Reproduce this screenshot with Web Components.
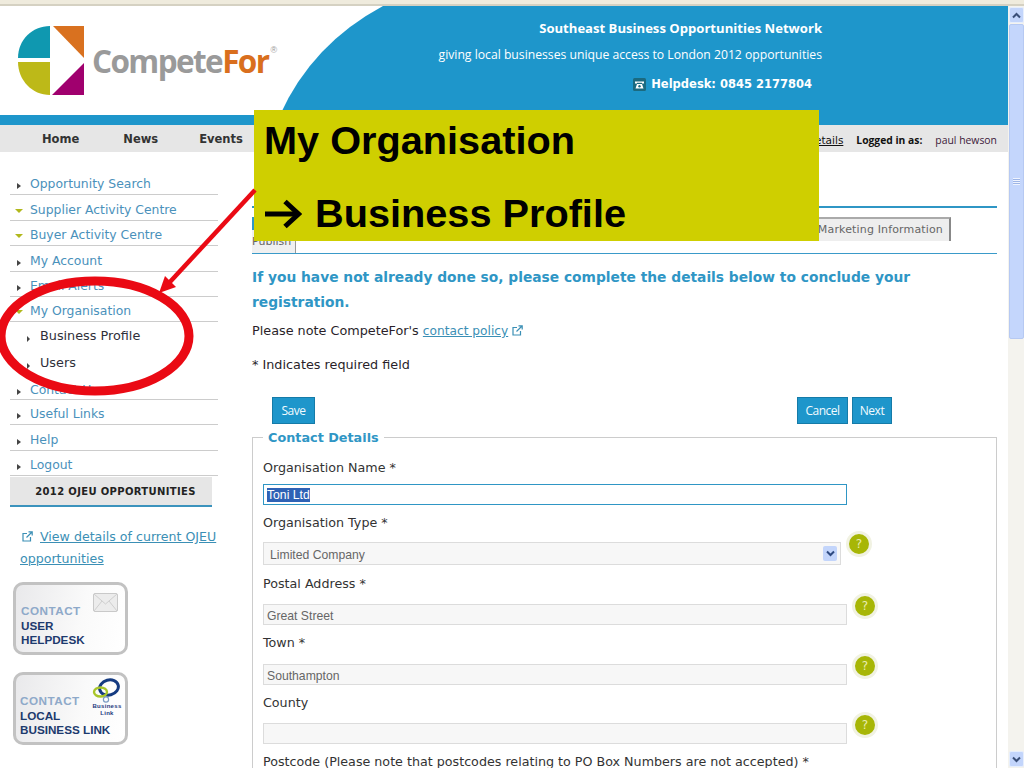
<!DOCTYPE html>
<html lang="en">
<head>
<meta charset="utf-8">
<title>CompeteFor - Business Profile</title>
<style>
  html, body { margin: 0; padding: 0; background: #fff; }
  body { font: 13px "DejaVu Sans", sans-serif; color: #222; }
</style>
</head>
<body>
<browser-frame>
  <site-header></site-header>
  <site-nav></site-nav>
  <page-body>
    <side-menu slot="side"></side-menu>
    <profile-form></profile-form>
  </page-body>
  <callout-overlay slot="overlay"></callout-overlay>
</browser-frame>

<script>
const extIcon = `<svg width="11" height="11" viewBox="0 0 11 11" fill="none" stroke="#3b8fb5" stroke-width="1.2"><path d="M5 2.5H1v7.5h7.5V6"/><path d="M4.5 6.5L10 1M6.5 .8H10.2V4.5"/></svg>`;

class BrowserFrame extends HTMLElement {
  constructor() {
    super();
    this.attachShadow({ mode: 'open' }).innerHTML = `
      <style>
        :host { display: block; position: relative; width: 1024px; height: 768px; overflow: hidden; }
        .chrome { height: 6px; box-sizing: border-box; background: #efebdd; border-bottom: 2px solid #d5d1c2; }
        .row { display: flex; height: 762px; }
        .page { width: 1008px; overflow: hidden; }
        .bar { width: 16px; display: flex; flex-direction: column; background: #f4f3ee; }
        .btn { height: 16px; margin: 1px; width: 15px; box-sizing: border-box; border-radius: 2px; background: #c3d5fb; border: 1px solid #e6eefc; display: flex; align-items: center; justify-content: center; }
        .thumb { height: 315px; margin-left: 1px; width: 15px; box-sizing: border-box; background: #c4d6fc; border: 1px solid #b6c9f2; border-radius: 2px; display: flex; align-items: center; justify-content: center; }
        .grip { width: 7px; height: 7px; background: repeating-linear-gradient(#eef3fe 0 1px, #9db5e6 1px 2px); }
        .track { flex: 1; }
      </style>
      <div class="chrome"></div>
      <div class="row">
        <div class="page"><slot></slot></div>
        <div class="bar">
          <div class="btn"><svg width="9" height="7" viewBox="0 0 9 7" fill="none" stroke="#3a4f78" stroke-width="2"><path d="M1 5.5L4.5 2L8 5.5"/></svg></div>
          <div class="thumb"><div class="grip"></div></div>
          <div class="track"></div>
          <div class="btn"><svg width="9" height="7" viewBox="0 0 9 7" fill="none" stroke="#3a4f78" stroke-width="2"><path d="M1 1.5L4.5 5L8 1.5"/></svg></div>
        </div>
      </div>
      <slot name="overlay"></slot>`;
  }
}
customElements.define('browser-frame', BrowserFrame);

class SiteHeader extends HTMLElement {
  constructor() {
    super();
    this.attachShadow({ mode: 'open' }).innerHTML = `
      <style>
        :host { display: block; }
        .top { display: flex; height: 109px; background: #fff; }
        .logo { width: 270px; flex: none; display: flex; align-items: flex-start; padding: 20px 0 0 18px; box-sizing: border-box; }
        .logo svg { flex: none; }
        .word { font: 700 31.5px/1 "Open Sans", sans-serif; letter-spacing: -1.6px; color: #9a9a9a; margin: 19px 0 0 6px; white-space: nowrap; }
        .word b { color: #d96f1e; font-weight: 700; }
        .word sup { font: 9px "Liberation Sans", sans-serif; letter-spacing: 0; color: #9a9a9a; vertical-align: top; margin-left: 2px; }
        .blue { flex: 1; background: #1e96cb; color: #fff; clip-path: path('M 10 109 Q 42 38 113 0 L 738 0 L 738 109 Z'); padding: 13px 186px 0 0; box-sizing: border-box; text-align: right; }
        .t1 { font: 700 13.1px/18px "Open Sans", sans-serif; }
        .t2 { font: 12.2px/18px "Open Sans", sans-serif; margin-top: 9px; }
        .t3 { font: 700 11.5px/18px "DejaVu Sans", sans-serif; margin: 11px 10px 0 0; display: flex; justify-content: flex-end; align-items: center; gap: 5px; }
        .bar { height: 10px; background: #1e96cb; }
      </style>
      <div class="top">
        <div class="logo">
          <svg width="68" height="69" viewBox="0 0 68 69">
            <path d="M32 0V32H0C0 14 14 0 32 0Z" fill="#0f98b0"/>
            <path d="M32 36V69C14 69 0 54 0 36Z" fill="#bdb918"/>
            <path d="M35 0H66V32Z" fill="#d9711f"/>
            <path d="M66 37V69H34Z" fill="#a0006e"/>
          </svg>
          <div class="word">Compete<b>For</b><sup>®</sup></div>
        </div>
        <div class="blue">
          <div class="t1">Southeast Business Opportunities Network</div>
          <div class="t2">giving local businesses unique access to London 2012 opportunities</div>
          <div class="t3">
            <svg width="13" height="13" viewBox="0 0 13 13"><rect width="13" height="13" rx="1.5" fill="#1b6a80"/><path d="M2 5.5V3.5H11V5.5H9V4.7H4V5.5ZM4 6H9L10.5 10.5H2.5Z" fill="#fff"/><circle cx="6.5" cy="8.2" r="1.2" fill="#1b6a80"/></svg>
            <span>Helpdesk: 0845 2177804</span>
          </div>
        </div>
      </div>
      <div class="bar"></div>`;
  }
}
customElements.define('site-header', SiteHeader);

class SiteNav extends HTMLElement {
  constructor() {
    super();
    this.attachShadow({ mode: 'open' }).innerHTML = `
      <style>
        :host { display: flex; align-items: center; height: 27px; background: #e6e6e6; font: 700 11.5px "DejaVu Sans", sans-serif; color: #333; }
        .home { margin-left: 42px; }
        .news { margin-left: 44px; }
        .events { margin-left: 41px; }
        .right { margin-left: auto; display: flex; gap: 13px; padding: 3px 11px 0 0; color: #111; align-items: center; }
        .right u { font: 10.5px "DejaVu Sans", sans-serif; }
        .right b { font: 700 10.3px "Open Sans", sans-serif; }
        .right span { font: 10.4px "Open Sans", sans-serif; color: #40203a; }
      </style>
      <div class="home">Home</div>
      <div class="news">News</div>
      <div class="events">Events</div>
      <div class="right"><u>Details</u><b>Logged in as:</b><span>paul hewson</span></div>`;
  }
}
customElements.define('site-nav', SiteNav);

class PageBody extends HTMLElement {
  constructor() {
    super();
    this.attachShadow({ mode: 'open' }).innerHTML = `
      <style>
        :host { display: flex; align-items: flex-start; }
        .side { width: 208px; margin-left: 10px; flex: none; }
        .main { width: 745px; margin-left: 34px; flex: none; }
      </style>
      <div class="side"><slot name="side"></slot></div>
      <div class="main"><slot></slot></div>`;
  }
}
customElements.define('page-body', PageBody);

class MenuItem extends HTMLElement {
  constructor() {
    super();
    const kind = this.getAttribute('kind') || 'closed';
    this.attachShadow({ mode: 'open' }).innerHTML = `
      <style>
        :host { display: flex; align-items: center; box-sizing: border-box; height: var(--h, 25px); border-bottom: 1px solid #ccc; color: #4a91bb; font-size: 12.4px; padding: 3px 0 0 20px; position: relative; white-space: nowrap; }
        :host([kind="sub"]) { border-bottom: none; color: #2f2f3a; font-size: 12.8px; padding-left: 30px; padding-top: 0; }
        .m { position: absolute; width: 0; height: 0; top: 50%; }
        .closed { left: 7px; margin-top: 1px; border-left: 4px solid #444; border-top: 3px solid transparent; border-bottom: 3px solid transparent; }
        .open { left: 5px; margin-top: 1px; border-top: 4px solid #b1b81c; border-left: 4.5px solid transparent; border-right: 4.5px solid transparent; }
        .sub { left: 17px; margin-top: 0; border-left: 3px solid #444; border-top: 3px solid transparent; border-bottom: 3px solid transparent; }
      </style>
      <i class="m ${kind}"></i><slot></slot>`;
  }
}
customElements.define('menu-item', MenuItem);

class ContactBadge extends HTMLElement {
  constructor() {
    super();
    this.attachShadow({ mode: 'open' }).innerHTML = `
      <style>
        :host { display: block; position: relative; box-sizing: border-box; width: 115px; height: 73px; margin-left: 3px; border: 3px solid #c2c2c2; border-radius: 10px; background: linear-gradient(100deg, #e9e9eb, #fafafa 60%, #fff); font: 700 11.7px/14.5px "Liberation Sans", sans-serif; color: #1d3a6e; padding: 19px 0 0 var(--pad, 5px); }
        .c { color: #8ea9c9; letter-spacing: .5px; }
        .pic { position: absolute; }
      </style>
      <div class="c">CONTACT</div>
      <div><slot></slot></div>
      <div class="pic" style="${this.getAttribute('pic-style') || ''}"><slot name="pic"></slot></div>`;
  }
}
customElements.define('contact-badge', ContactBadge);

class SideMenu extends HTMLElement {
  constructor() {
    super();
    this.attachShadow({ mode: 'open' }).innerHTML = `
      <style>
        :host { display: block; padding-top: 17px; }
        .ojeu { width: 202px; height: 30px; box-sizing: border-box; margin-top: 1px; padding-left: 9px; background: #e6e6e6; border-bottom: 2px solid #3b93bd; display: flex; align-items: center; justify-content: center; font: 700 10px "DejaVu Sans", sans-serif; letter-spacing: .35px; color: #222; }
        .link { margin: 19px 0 0 10px; line-height: 22px; font-size: 12.6px; color: #3b8fb5; width: 200px; }
        .link a { color: inherit; text-decoration: underline; }
        .link svg { margin: 0 7px 0 2px; vertical-align: -1px; }
        contact-badge { margin-top: 17px; }
        .first { margin-top: 12px; }
        .bl { font: 700 6px/7px "Liberation Sans", sans-serif; letter-spacing: .3px; text-align: center; color: #1d3a7e; }
      </style>
      <menu-item style="--h:26px">Opportunity Search</menu-item>
      <menu-item kind="open" style="--h:26px">Supplier Activity Centre</menu-item>
      <menu-item kind="open">Buyer Activity Centre</menu-item>
      <menu-item style="--h:26px">My Account</menu-item>
      <menu-item>Email Alerts</menu-item>
      <menu-item kind="open">My Organisation</menu-item>
      <menu-item kind="sub" style="--h:27px">Business Profile</menu-item>
      <menu-item kind="sub" style="--h:27px">Users</menu-item>
      <menu-item style="--h:24px">Contact Us</menu-item>
      <menu-item>Useful Links</menu-item>
      <menu-item style="--h:26px">Help</menu-item>
      <menu-item>Logout</menu-item>
      <div class="ojeu">2012 OJEU OPPORTUNITIES</div>
      <div class="link">${extIcon}<a href="#">View details of current OJEU opportunities</a></div>
      <contact-badge class="first" pic-style="right:7px;top:8px">
        USER<br>HELPDESK
        <svg slot="pic" width="25" height="19" viewBox="0 0 25 19"><rect x=".5" y=".5" width="24" height="18" rx="1.5" fill="#ececec" stroke="#c9c9c9"/><path d="M1 1L12.5 11L24 1M1 18L9 8M24 18L16 8" fill="none" stroke="#cfcfcf"/></svg>
      </contact-badge>
      <contact-badge style="--pad:4px" pic-style="right:3px;top:3px">
        LOCAL<br>BUSINESS LINK
        <div slot="pic">
          <svg width="30" height="25" viewBox="0 0 30 25" style="display:block" fill="none"><ellipse cx="17" cy="9.5" rx="9.5" ry="7.5" stroke="#143a80" stroke-width="3" transform="rotate(-15 17 9.5)"/><ellipse cx="8.5" cy="14" rx="6.5" ry="4.5" stroke="#a8c52a" stroke-width="2.4"/><circle cx="14" cy="21.5" r="2.6" stroke="#7d9cc4" stroke-width="1.2"/></svg>
          <div class="bl">Business<br>Link</div>
        </div>
      </contact-badge>`;
  }
}
customElements.define('side-menu', SideMenu);

class HelpBadge extends HTMLElement {
  constructor() {
    super();
    this.attachShadow({ mode: 'open' }).innerHTML = `
      <style>
        :host { display: flex; align-items: center; justify-content: center; box-sizing: border-box; width: 26px; height: 26px; flex: none; border-radius: 50%; background: #a7b606; border: 3px solid #f1f2e2; color: #e8edb0; font: 12px "DejaVu Sans", sans-serif; }
      </style>?`;
  }
}
customElements.define('help-badge', HelpBadge);

class FormField extends HTMLElement {
  constructor() {
    super();
    const type = this.getAttribute('type') || 'text';
    const value = this.getAttribute('value') || '';
    const help = this.hasAttribute('help');
    this.attachShadow({ mode: 'open' }).innerHTML = `
      <style>
        :host { display: block; margin-bottom: var(--after, 8px); }
        label { display: block; line-height: 20px; height: 18px; font-size: 12.7px; color: #333; margin-bottom: var(--gap, 8px); white-space: nowrap; }
        .row { display: flex; align-items: flex-start; }
        .box { box-sizing: border-box; width: 584px; height: 21px; background: #f7f7f7; border: 1px solid #dcdcdc; font: 12.2px/22px "Liberation Sans", sans-serif; color: #666; padding-left: 3px; }
        .focus { background: #fff; border-color: #2f96c5; color: #111; line-height: 20px; }
        .focus span { background: #2f62b5; color: #fff; }
        .select { width: 578px; height: 23px; line-height: 25px; padding-left: 6px; position: relative; }
        .arrow { position: absolute; right: 3px; top: 3px; width: 14px; height: 15px; background: #c3d5fb; border-radius: 2px; display: flex; align-items: center; justify-content: center; }
        help-badge { margin: -11px 0 0 5px; }
      </style>
      <label>${this.getAttribute('label')}</label>
      <div class="row">
        <div class="box ${type}"><span>${value}</span>${type === 'select' ? '<div class="arrow"><svg width="9" height="7" viewBox="0 0 9 7" fill="none" stroke="#2e4a80" stroke-width="2"><path d="M1 1.5L4.5 5L8 1.5"/></svg></div>' : ''}</div>
        ${help ? '<help-badge></help-badge>' : ''}
      </div>`;
  }
}
customElements.define('form-field', FormField);

class ActionButton extends HTMLElement {
  constructor() {
    super();
    this.attachShadow({ mode: 'open' }).innerHTML = `
      <style>
        :host { display: inline-flex; align-items: center; justify-content: center; box-sizing: border-box; height: 27px; background: #1e96cb; border: 1px solid #157ba8; color: #f2fbff; font: 12px "Open Sans", sans-serif; letter-spacing: -.5px; }
      </style><slot></slot>`;
  }
}
customElements.define('action-button', ActionButton);

class ProfileForm extends HTMLElement {
  constructor() {
    super();
    this.attachShadow({ mode: 'open' }).innerHTML = `
      <style>
        :host { display: block; padding-top: 54px; }
        .rule { height: 2px; background: #2f96c5; }
        .tabs { display: flow-root; height: 45px; border-bottom: 1px solid #3a9ac9; position: relative; }
        .glimpse { position: absolute; left: 0; top: 9px; width: 3px; height: 13px; background: #2f96c5; }
        .market { margin: 9px 46px 0 auto; width: 160px; height: 24px; box-sizing: border-box; background: #eee; border-top: 2px solid #aaa; border-right: 2px solid #888; font-size: 11px; line-height: 22px; color: #666; text-align: right; padding-right: 6px; letter-spacing: .15px; }
        .publish { margin-top: -12px; width: 44px; height: 24px; box-sizing: border-box; background: #f0f0f0; border-right: 1px solid #999; font-size: 11px; line-height: 26px; color: #666; }
        h2 { margin: 11px 0 0; font: 700 13.8px/25px "DejaVu Sans", sans-serif; color: #2f96c5; }
        p { margin: 0; line-height: 20px; font-size: 12.8px; color: #2a1f2a; }
        .note { margin-top: 6px; }
        .note a { color: #3b8fb5; font-size: 12.2px; }
        .note svg { vertical-align: -1px; }
        .req { margin-top: 14px; }
        .acts { display: flex; margin-top: 22px; padding: 0 105px 0 20px; gap: 4px; }
        .save { width: 43px; margin-right: auto; }
        .cancel { width: 51px; }
        .next { width: 40px; }
        fieldset { margin: 4px 0 0; border: 1px solid #ccc; padding: 12px 10px 0; min-width: 0; }
        legend { padding: 2px 5px 0; font: 700 12.8px/16px "DejaVu Sans", sans-serif; color: #2f96c5; }
      </style>
      <div class="rule"></div>
      <div class="tabs">
        <div class="glimpse"></div>
        <div class="market">Marketing Information</div>
        <div class="publish">Publish</div>
      </div>
      <h2>If you have not already done so, please complete the details below to conclude your registration.</h2>
      <p class="note">Please note CompeteFor's <a href="#">contact policy</a> ${extIcon}</p>
      <p class="req">* Indicates required field</p>
      <div class="acts">
        <action-button class="save">Save</action-button>
        <action-button class="cancel">Cancel</action-button>
        <action-button class="next">Next</action-button>
      </div>
      <fieldset>
        <legend>Contact Details</legend>
        <form-field label="Organisation Name *" value="Toni Ltd" type="focus"></form-field>
        <form-field label="Organisation Type *" value="Limited Company" type="select" help style="--gap:11px;--after:9px"></form-field>
        <form-field label="Postal Address *" value="Great Street" help style="--gap:12px"></form-field>
        <form-field label="Town *" value="Southampton" help style="--gap:13px"></form-field>
        <form-field label="County" help style="--gap:12px"></form-field>
        <form-field label="Postcode (Please note that postcodes relating to PO Box Numbers are not accepted) *" style="--gap:12px"></form-field>
      </fieldset>`;
  }
}
customElements.define('profile-form', ProfileForm);

class CalloutOverlay extends HTMLElement {
  constructor() {
    super();
    this.attachShadow({ mode: 'open' }).innerHTML = `
      <style>
        :host { display: block; position: absolute; inset: 0; pointer-events: none; }
        .box { position: absolute; left: 254px; top: 110px; width: 565px; height: 131px; background: #cfcf00; color: #000; font: 700 39.7px/73px "Liberation Sans", sans-serif; padding-left: 10px; box-sizing: border-box; }
        .box div { display: flex; align-items: center; gap: 13px; height: 73px; white-space: nowrap; }
        .box div:first-child { margin-top: -6px; }
        .box svg { margin-left: 1px; }
        svg.ink { position: absolute; left: 0; top: 0; }
      </style>
      <div class="box">
        <div>My Organisation</div>
        <div><svg width="37" height="30" viewBox="0 0 37 30" fill="none" stroke="#000" stroke-width="5"><path d="M0 15H33"/><path d="M20 2.5L33.5 15L20 27.5"/></svg><span>Business Profile</span></div>
      </div>
      <svg class="ink" width="1024" height="768" viewBox="0 0 1024 768" fill="none">
        <ellipse cx="95" cy="336" rx="94" ry="55" stroke="#ea0a14" stroke-width="9"/>
        <path d="M255 190L169 283" stroke="#ea0a14" stroke-width="4.5"/>
        <path d="M159 293L165 276L176 287Z" fill="#ea0a14"/>
      </svg>`;
  }
}
customElements.define('callout-overlay', CalloutOverlay);
</script>
</body>
</html>
